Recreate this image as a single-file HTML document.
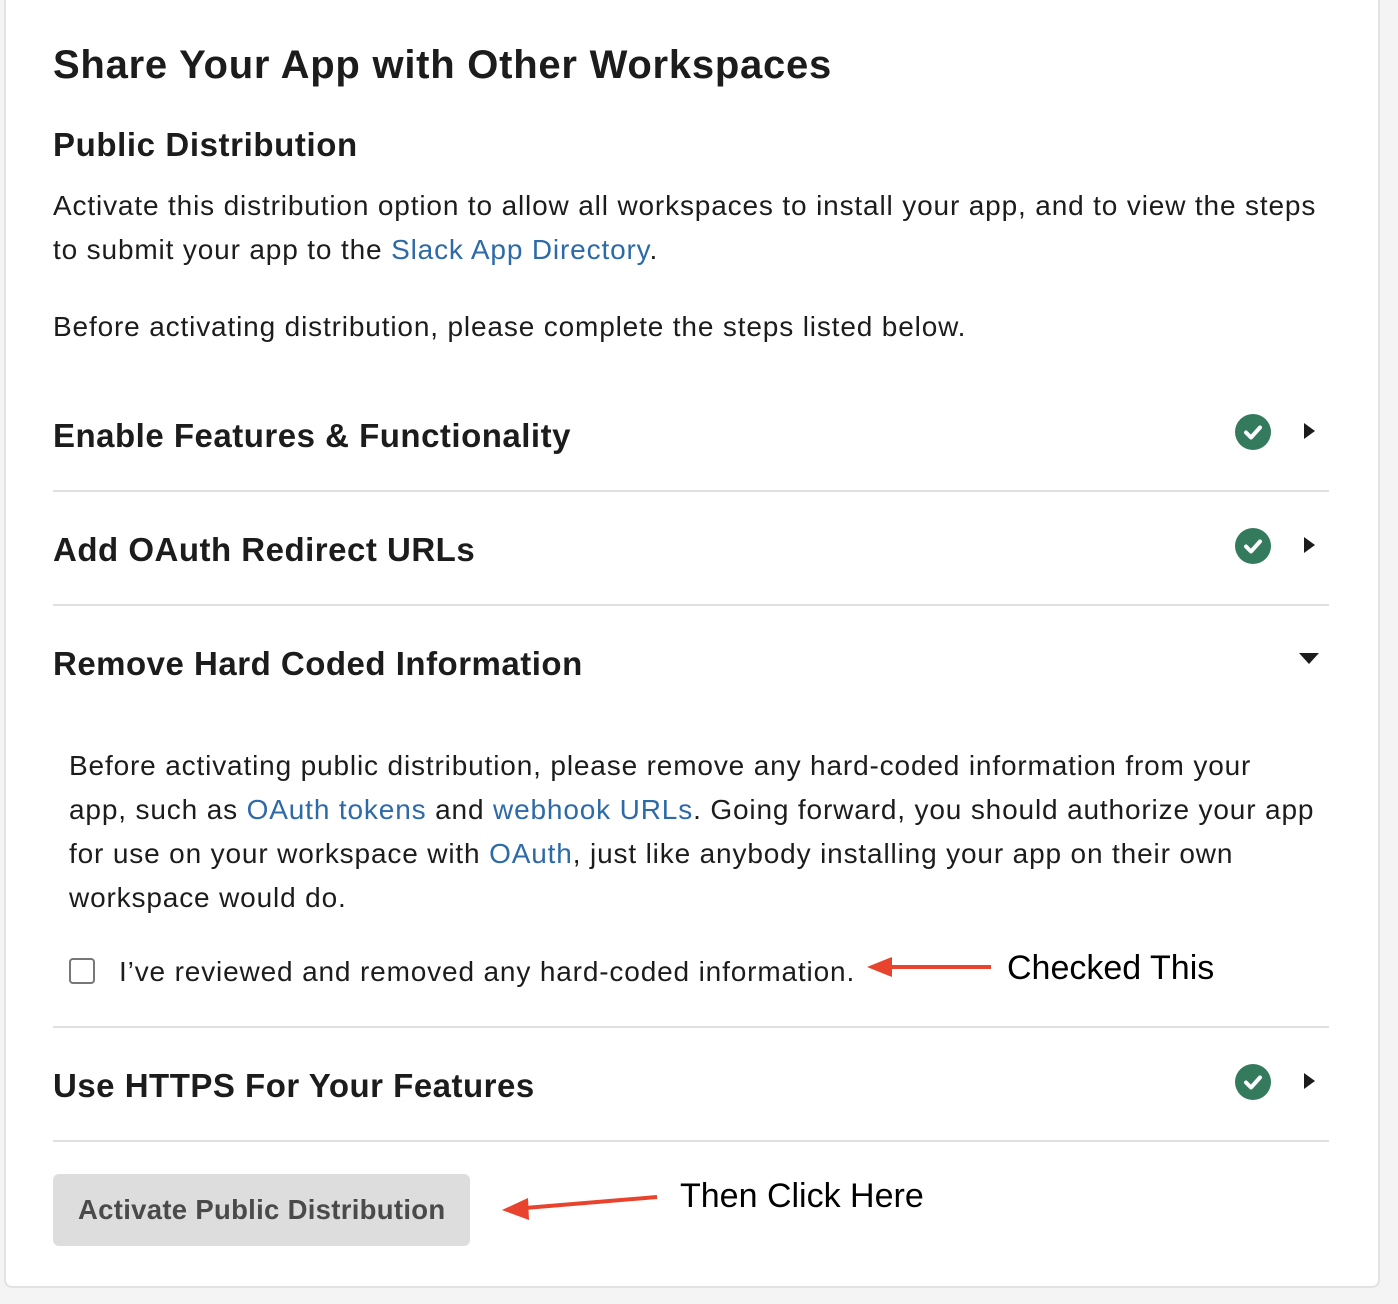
<!DOCTYPE html>
<html><head><meta charset="utf-8"><style>
html,body{margin:0;padding:0;background:#f4f4f4;width:1398px;height:1304px;overflow:hidden;font-family:"Liberation Sans",sans-serif;color:#1d1c1d}
.card{position:absolute;left:4px;top:-10px;width:1372px;height:1294px;background:#fff;border:2px solid #e2e2e2;border-radius:8px}
.t{position:absolute;white-space:nowrap;line-height:1}
.b{font-weight:bold}
.p{font-size:28px;letter-spacing:0.85px}
.h{font-size:33px;letter-spacing:0.5px;font-weight:bold}
a{color:#2d6aa8;text-decoration:none}
.hr{position:absolute;left:53px;width:1276px;height:2px;background:#e0e0e0}
.chk{position:absolute;width:36px;height:36px;border-radius:50%;background:#347a5c}
.tri{position:absolute;width:0;height:0;border-top:8px solid transparent;border-bottom:8px solid transparent;border-left:11px solid #1d1c1d}
</style></head><body>
<div class="card"></div>
<div class="t b" style="left:53px;top:45px;font-size:40px;letter-spacing:0.75px">Share Your App with Other Workspaces</div>
<div class="t b" style="left:53px;top:128px;font-size:33px;letter-spacing:0.6px">Public Distribution</div>
<div class="t p" style="left:53px;top:192px">Activate this distribution option to allow all workspaces to install your app, and to view the steps</div>
<div class="t p" style="left:53px;top:236px">to submit your app to the <a>Slack App Directory</a>.</div>
<div class="t p" style="left:53px;top:313px">Before activating distribution, please complete the steps listed below.</div>

<div class="t h" style="left:53px;top:419px">Enable Features &amp; Functionality</div>
<div class="chk" style="left:1235px;top:414px"></div>
<svg style="position:absolute;left:1235px;top:414px" width="36" height="36"><path d="M11 18.5l5 5 9-10" stroke="#fff" stroke-width="4" fill="none" stroke-linecap="round" stroke-linejoin="round"/></svg>
<div class="tri" style="left:1304px;top:423px"></div>
<div class="hr" style="top:490px"></div>

<div class="t h" style="left:53px;top:533px">Add OAuth Redirect URLs</div>
<div class="chk" style="left:1235px;top:528px"></div>
<svg style="position:absolute;left:1235px;top:528px" width="36" height="36"><path d="M11 18.5l5 5 9-10" stroke="#fff" stroke-width="4" fill="none" stroke-linecap="round" stroke-linejoin="round"/></svg>
<div class="tri" style="left:1304px;top:537px"></div>
<div class="hr" style="top:604px"></div>

<div class="t h" style="left:53px;top:647px">Remove Hard Coded Information</div>
<div style="position:absolute;left:1299px;top:653px;width:0;height:0;border-left:10px solid transparent;border-right:10px solid transparent;border-top:11px solid #1d1c1d"></div>

<div class="t p" style="left:69px;top:752px">Before activating public distribution, please remove any hard-coded information from your</div>
<div class="t p" style="left:69px;top:796px">app, such as <a>OAuth tokens</a> and <a>webhook URLs</a>. Going forward, you should authorize your app</div>
<div class="t p" style="left:69px;top:840px">for use on your workspace with <a>OAuth</a>, just like anybody installing your app on their own</div>
<div class="t p" style="left:69px;top:884px">workspace would do.</div>
<div style="position:absolute;left:69px;top:958px;width:22px;height:22px;border:2px solid #777;border-radius:4px"></div>
<div class="t p" style="left:119px;top:958px">I’ve reviewed and removed any hard-coded information.</div>
<svg style="position:absolute;left:860px;top:950px" width="140" height="36"><line x1="28" y1="17" x2="131" y2="17" stroke="#e8432c" stroke-width="4"/><polygon points="7,17 32,7 32,27" fill="#e8432c"/></svg>
<div class="t" style="left:1007px;top:951px;font-size:34px;color:#000">Checked This</div>
<div class="hr" style="top:1026px"></div>

<div class="t h" style="left:53px;top:1069px">Use HTTPS For Your Features</div>
<div class="chk" style="left:1235px;top:1064px"></div>
<svg style="position:absolute;left:1235px;top:1064px" width="36" height="36"><path d="M11 18.5l5 5 9-10" stroke="#fff" stroke-width="4" fill="none" stroke-linecap="round" stroke-linejoin="round"/></svg>
<div class="tri" style="left:1304px;top:1073px"></div>
<div class="hr" style="top:1140px"></div>

<div style="position:absolute;left:53px;top:1174px;width:417px;height:72px;background:#dddddd;border-radius:6px"></div>
<div class="t b" style="left:78px;top:1196px;font-size:27.5px;letter-spacing:0.3px;color:#4a4a4a">Activate Public Distribution</div>
<svg style="position:absolute;left:495px;top:1185px" width="170" height="40"><line x1="30" y1="23" x2="162" y2="12" stroke="#e8432c" stroke-width="4"/><polygon points="7,25 33,13 34,35" fill="#e8432c"/></svg>
<div class="t" style="left:680px;top:1179px;font-size:34px;color:#000">Then Click Here</div>
</body></html>
